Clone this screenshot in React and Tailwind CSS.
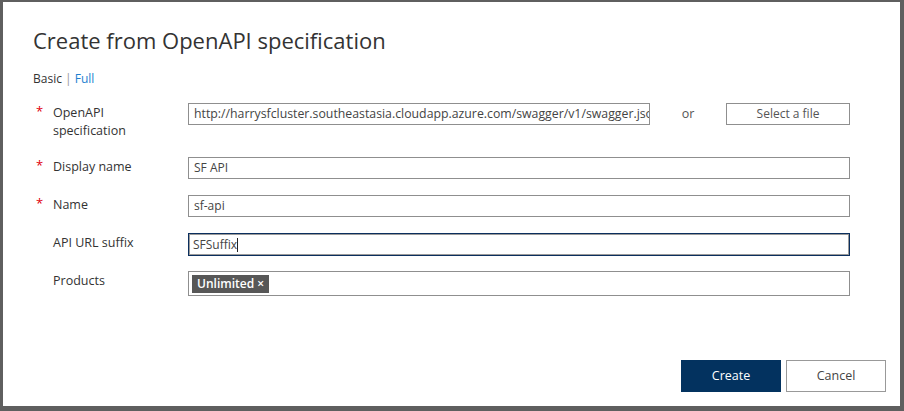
import React from 'react';

const font = { fontFamily: '"Open Sans", "Noto Sans", "Liberation Sans", sans-serif' };

function Field({ label, required, children, className = '' }) {
  return (
    <div className={`flex items-start ${className}`}>
      <div className="w-[20px] pl-[3px] text-[#e0000b] text-[13px] leading-[16px]">{required ? '*' : ''}</div>
      <div className="w-[135px] pt-px text-[12.5px] leading-[18px] text-[#333]">{label}</div>
      <div className="flex-1 flex items-center">{children}</div>
    </div>
  );
}

export default function App() {
  return (
    <div className="w-[904px] h-[411px] bg-[#5f5f5f] pt-[2px] pl-[3px] pr-[4px] pb-[5px]" style={font}>
      <div className="h-[404px] bg-white flex flex-col pt-[22px] pl-[30px] pr-[14px] pb-[14px]">
        {/* Header */}
        <h1 className="text-[22px] leading-[32px] text-[#333] font-normal">Create from OpenAPI specification</h1>
        <div className="mt-[14px] text-[12px] leading-[18px] text-[#333]">
          Basic <span className="text-[#999]">|</span> <span className="text-[#1e7fd0]">Full</span>
        </div>

        {/* Form */}
        <div className="pr-[36px]">
          <Field label={<>OpenAPI<br />specification</>} required className="mt-[15px]">
            <div className="w-[462px] h-[22px] border border-[#8f8f8f] pl-[5px] pr-[2px] text-[12.3px] leading-[20px] text-[#444] overflow-hidden whitespace-nowrap">
              http://harrysfcluster.southeastasia.cloudapp.azure.com/swagger/v1/swagger.json
            </div>
            <div className="w-[76px] text-center text-[12.5px] text-[#555] leading-[20px]">or</div>
            <button className="w-[124px] h-[22px] border border-[#8f8f8f] text-[12px] text-[#555] leading-[20px]">Select a file</button>
          </Field>

          <Field label="Display name" required className="mt-[17px]">
            <div className="w-full h-[22px] border border-[#8f8f8f] pl-[5px] text-[12px] leading-[20px] text-[#444]">SF API</div>
          </Field>

          <Field label="Name" required className="mt-[16px]">
            <div className="w-full h-[22px] border border-[#8f8f8f] pl-[5px] text-[12px] leading-[20px] text-[#444]">sf-api</div>
          </Field>

          <Field label="API URL suffix" className="mt-[16px]">
            <div className="w-full h-[23px] border border-[#0b2f5e] shadow-[inset_0_0_0_1px_#9a9a9a] pl-[4px] text-[12px] leading-[21px] text-[#444] flex items-center">
              SFSuffix<span className="inline-block w-px h-[14px] bg-[#222]" />
            </div>
          </Field>

          <Field label="Products" className="mt-[15px]">
            <div className="w-full h-[25px] border border-[#8f8f8f] pl-[3px] flex items-center">
              <span className="h-[18px] px-[5px] bg-[#575757] text-white text-[12px] font-semibold leading-[18px]">Unlimited ×</span>
            </div>
          </Field>
        </div>

        {/* Footer */}
        <div className="mt-auto flex justify-end gap-[5px]">
          <button className="w-[100px] h-[32px] bg-[#03325f] text-white text-[12.5px]">Create</button>
          <button className="w-[100px] h-[32px] border border-[#999] bg-white text-[#444] text-[12.5px]">Cancel</button>
        </div>
      </div>
    </div>
  );
}
